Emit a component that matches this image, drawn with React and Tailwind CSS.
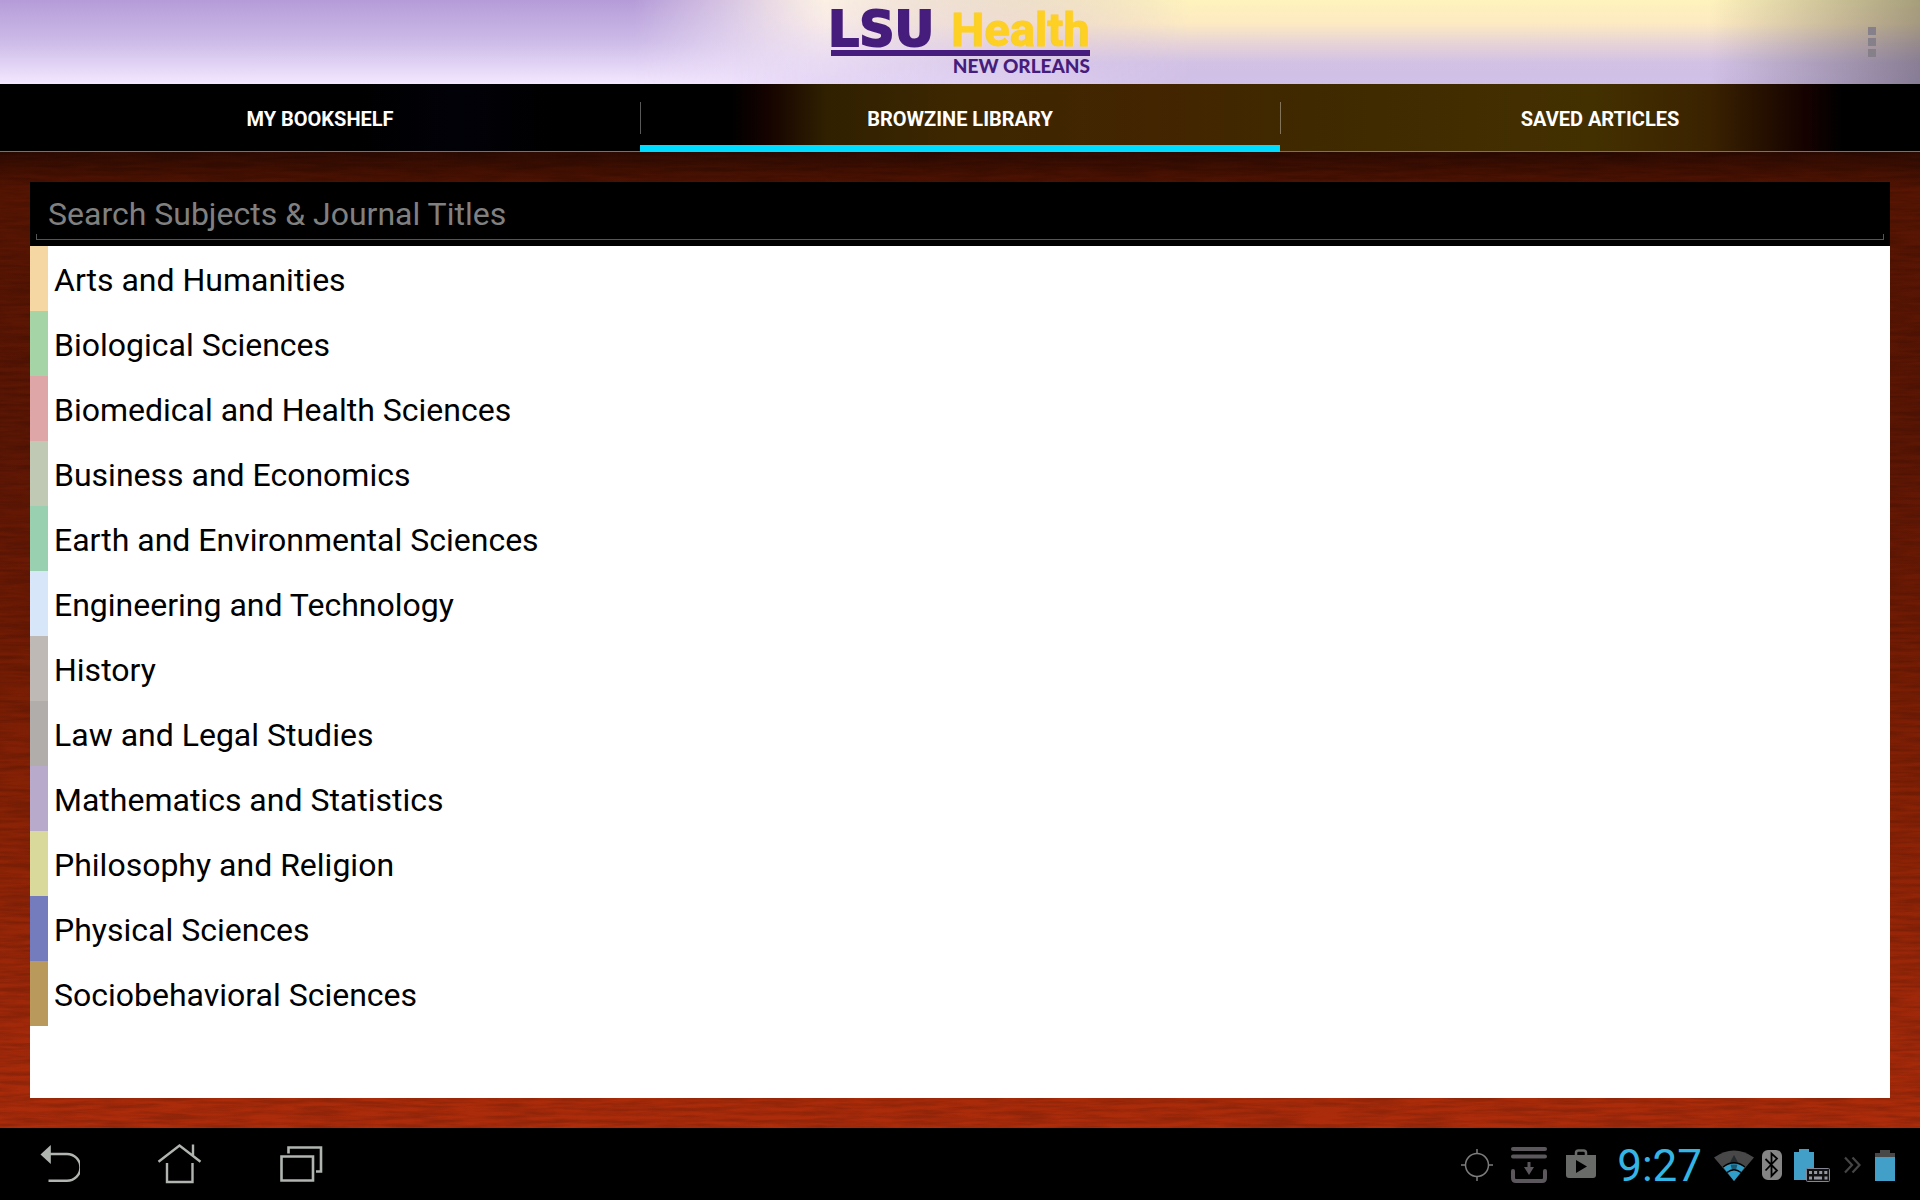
import React, { useState } from 'react';

const tabs = ['MY BOOKSHELF', 'BROWZINE LIBRARY', 'SAVED ARTICLES'];

const subjects = [
  { name: 'Arts and Humanities', color: 'bg-[#f5d7a4]' },
  { name: 'Biological Sciences', color: 'bg-[#a5d5a7]' },
  { name: 'Biomedical and Health Sciences', color: 'bg-[#dfa6a7]' },
  { name: 'Business and Economics', color: 'bg-[#bfc9b4]' },
  { name: 'Earth and Environmental Sciences', color: 'bg-[#99d0b0]' },
  { name: 'Engineering and Technology', color: 'bg-[#d7e6f8]' },
  { name: 'History', color: 'bg-[#bfb9b6]' },
  { name: 'Law and Legal Studies', color: 'bg-[#b1adaa]' },
  { name: 'Mathematics and Statistics', color: 'bg-[#b7aacb]' },
  { name: 'Philosophy and Religion', color: 'bg-[#d9d99c]' },
  { name: 'Physical Sciences', color: 'bg-[#747cbd]' },
  { name: 'Sociobehavioral Sciences', color: 'bg-[#ba995c]' },
];

const Logo = () => (
  <svg width="264" height="84" viewBox="0 0 264 84" role="img" aria-label="LSU Health New Orleans">
    <g fill="#461d7c">
      <text x="0" y="46" fontFamily="'DejaVu Sans'" fontWeight="700" fontSize="49" stroke="#461d7c" strokeWidth="2">
        LSU
      </text>
      <rect x="3" y="50" width="259" height="6" />
      <text x="262" y="73" textAnchor="end" fontFamily="Lato" fontWeight="900" fontSize="19">
        NEW ORLEANS
      </text>
    </g>
    <text x="262" y="46" textAnchor="end" fill="#fdd023" stroke="#fdd023" fontFamily="Roboto" fontWeight="700" fontSize="47">
      Health
    </text>
  </svg>
);

const Header = () => (
  <header className="relative flex h-21 items-center justify-center bg-linear-to-b from-[#b59cd8] via-[#cdbbe8] to-[#f3e8ff]">
    <div className="absolute inset-0 bg-linear-to-b from-[#fbf0ee] to-[#eadcfa] mask-[linear-gradient(to_right,transparent_33%,black_43%,transparent_60%)]" />
    <div className="absolute inset-0 bg-[linear-gradient(to_bottom,#fff3bd_0%,#fdeac2_28%,#e6d3d6_52%,#d2c1e4_75%,#d0bfe7_100%)] mask-[linear-gradient(to_right,transparent_38%,rgb(0_0_0/0.5)_50%,black_62%)]" />
    <div className="absolute inset-0 bg-linear-to-r from-transparent from-89% to-black/35" />
    <div className="relative">
      <Logo />
    </div>
    <button type="button" aria-label="More options" className="absolute right-11 flex flex-col gap-[3px]">
      <span className="size-2 bg-[#85808a]" />
      <span className="size-2 bg-[#85808a]" />
      <span className="size-2 bg-[#85808a]" />
    </button>
  </header>
);

const Tabs = ({ active, onChange }) => (
  <nav className="grid h-17 grid-cols-3 border-b border-[#7a706c] bg-[linear-gradient(to_right,#000_0%,#000_18%,#010108_24%,#000_29%,#000_38%,#150300_40%,#302000_43%,#3d2700_50%,#432500_60%,#3f2900_68%,#433000_83%,#3a2200_89%,#150200_94%,#000_96%)]">
    {tabs.map((tab, index) => (
      <button
        key={tab}
        type="button"
        onClick={() => onChange(index)}
        className="relative flex items-center justify-center pt-0.5 text-xl font-bold text-white"
      >
        {tab}
        {index > 0 && <span className="absolute top-[18px] left-0 h-8 w-px bg-white/35" />}
        {active === index && <span className="absolute inset-x-0 -bottom-px h-[7px] bg-[#00dcff]" />}
      </button>
    ))}
  </nav>
);

// Grain stretched along x so it reads as wood
const WoodGrain = () => (
  <svg className="absolute inset-0 h-full w-full opacity-15" aria-hidden="true">
    <filter id="grain" x="0" y="0" width="100%" height="100%">
      <feTurbulence type="fractalNoise" baseFrequency="0.02 0.25" numOctaves="4" seed="4" />
      <feColorMatrix values="0 0 0 0 0  0 0 0 0 0  0 0 0 0 0  2.4 0 0 0 -0.8" />
    </filter>
    <rect width="100%" height="100%" filter="url(#grain)" />
  </svg>
);

const SubjectList = () => {
  const [query, setQuery] = useState('');
  const visible = subjects.filter((s) => s.name.toLowerCase().includes(query.toLowerCase()));

  return (
    <div className="relative flex flex-1 flex-col bg-white">
      <div className="h-16 bg-black px-1.5 pb-1.5">
        <div className="flex h-full flex-col">
          <input
            type="text"
            aria-label="Search Subjects & Journal Titles"
            placeholder="Search Subjects & Journal Titles"
            value={query}
            onChange={(e) => setQuery(e.target.value)}
            className="min-h-0 flex-1 bg-transparent px-3 pt-3 text-[32px] leading-10 text-white outline-none placeholder:text-[#808080]"
          />
          <div className="h-1.5 border-x border-b border-[#555]" />
        </div>
      </div>
      <ul>
        {visible.map((subject) => (
          <li key={subject.name} className="flex h-[65px]">
            <span className={`w-[18px] ${subject.color}`} />
            <a href="#" className="flex flex-1 items-center pt-0.5 pl-1.5 text-[32px] text-black">
              {subject.name}
            </a>
          </li>
        ))}
      </ul>
    </div>
  );
};

const NavButtons = () => (
  <div className="flex gap-[76px] pl-8">
    <button type="button" aria-label="Back">
      <svg width="48" height="48" viewBox="0 0 48 48" fill="none" stroke="#b0b5b0" strokeWidth="2.4">
        <path d="M17 14h18a13.400 13.400 0 0 1 0 26.800H16.500" />
        <path d="M18.800 5v19L8.500 14.500z" fill="#b0b5b0" stroke="none" />
      </svg>
    </button>
    <button type="button" aria-label="Home">
      <svg width="48" height="48" viewBox="0 0 48 48" fill="none" stroke="#b0b5b0" strokeWidth="2.4">
        <path d="M2.500 21.800 23.500 5.500l21 16.300M37 4.500V16M11 23v19h25.500V23" />
      </svg>
    </button>
    <button type="button" aria-label="Recent apps">
      <svg width="48" height="48" viewBox="0 0 48 48" fill="none" stroke="#b0b5b0" strokeWidth="2.600">
        <path d="M1.500 16.500h31.500v24H1.500z" />
        <path d="M8.500 13.500V7.500h32.500v24h-5" />
      </svg>
    </button>
  </div>
);

const StatusIcons = () => (
  <div className="flex items-center pt-0.5 pr-[25px]">
    <svg width="32" height="36" viewBox="0 0 32 36" fill="none" stroke="#7c7c7c" strokeWidth="1.500">
      <circle cx="16" cy="18" r="11.500" />
      <path d="M16 2v5M16 29v5M0 18h5M27 18h5" />
    </svg>
    <svg className="ml-[18px]" width="36" height="38" viewBox="0 0 36 38" fill="#5c575c">
      <rect width="36" height="4" y="1" rx="2" />
      <rect width="36" height="4" y="8.500" rx="2" />
      <path d="M16.500 16h3v5h3.500l-5 8-5-8h3.500z" />
      <path d="M2 25v7q0 3 3 3h26q3 0 3-3v-7" fill="none" stroke="#5c575c" strokeWidth="4" strokeLinecap="round" />
    </svg>
    <svg className="ml-[18px]" width="32" height="36" viewBox="0 0 32 36">
      <path d="M1 8h30v20q0 3-3 3H4q-3 0-3-3z" fill="#686b68" />
      <path d="M11 8V6q0-2.500 2.500-2.500h5Q21 3.500 21 6v2" fill="none" stroke="#686b68" strokeWidth="2.500" />
      <path d="M11 13v13l11-6.500z" fill="#000" />
    </svg>
    <span className="ml-5 pt-0.5 text-[44px] leading-none text-[#33b5e5]">9:27</span>
    <svg className="ml-3" width="40" height="32" viewBox="0 0 40 32">
      <path d="M0 8.500Q20-5.500 40 8.500L20 32z" fill="#484848" />
      <path d="M9.500 18.500q10.500-8 21 0L20 32z" fill="#2f9fca" />
      <path d="M20 6l4 7.500h-8z" fill="#242a2d" />
      <path d="M16.500 15.500h7L22 21h-4z" fill="#1d5870" />
      <path d="M9 18q11-8.500 22 0M13 23.500q7-5.500 14 0" fill="none" stroke="#000" strokeWidth="1.400" />
    </svg>
    <svg className="ml-2" width="20" height="32" viewBox="0 0 20 32">
      <rect width="20" height="30" y="1" rx="6" fill="#858585" />
      <path d="M3.500 10 15 21.500 9.500 27V4.500L15 9.500 3.500 21.500" fill="none" stroke="#000" strokeWidth="1.800" />
    </svg>
    <svg className="ml-3" width="36" height="34" viewBox="0 0 36 34">
      <path d="M0 4h5V1h10v3h5v28H0z" fill="#429fc8" />
      <rect x="12.500" y="20.500" width="23" height="13" rx="1" fill="#111" stroke="#858594" />
      <path d="M15 24.500h18.500" stroke="#9696a2" strokeWidth="3" strokeDasharray="3 2.100" />
      <path d="M15 30h3M20 30h8M30.500 30h3" stroke="#9696a2" strokeWidth="3" />
    </svg>
    <svg className="ml-3.5" width="17" height="18" viewBox="0 0 17 18" fill="none" stroke="#454545" strokeWidth="2.200">
      <path d="M1 1.500 8 9l-7 7.500M8.500 1.500l7 7.500-7 7.500" />
    </svg>
    <svg className="ml-3.5" width="20" height="32" viewBox="0 0 20 32">
      <path d="M0 4h5V1h10v3h5v4H0z" fill="#484848" />
      <path d="M0 8h20v24H0z" fill="#429fc8" />
    </svg>
  </div>
);

const App = () => {
  const [active, setActive] = useState(1);

  return (
    <div className="flex min-h-screen flex-col bg-black font-[Roboto,sans-serif]">
      <Header />
      <Tabs active={active} onChange={setActive} />
      <main className="relative flex flex-1 flex-col bg-[linear-gradient(to_bottom,#2e0b02_0%,#581503_4%,#5c1604_30%,#701b04_48%,#8c2306_70%,#a2290a_90%,#ac2c0b_100%)] p-[30px]">
        <WoodGrain />
        <SubjectList />
      </main>
      <footer className="flex h-18 items-center justify-between bg-black">
        <NavButtons />
        <StatusIcons />
      </footer>
    </div>
  );
};

export default App;
